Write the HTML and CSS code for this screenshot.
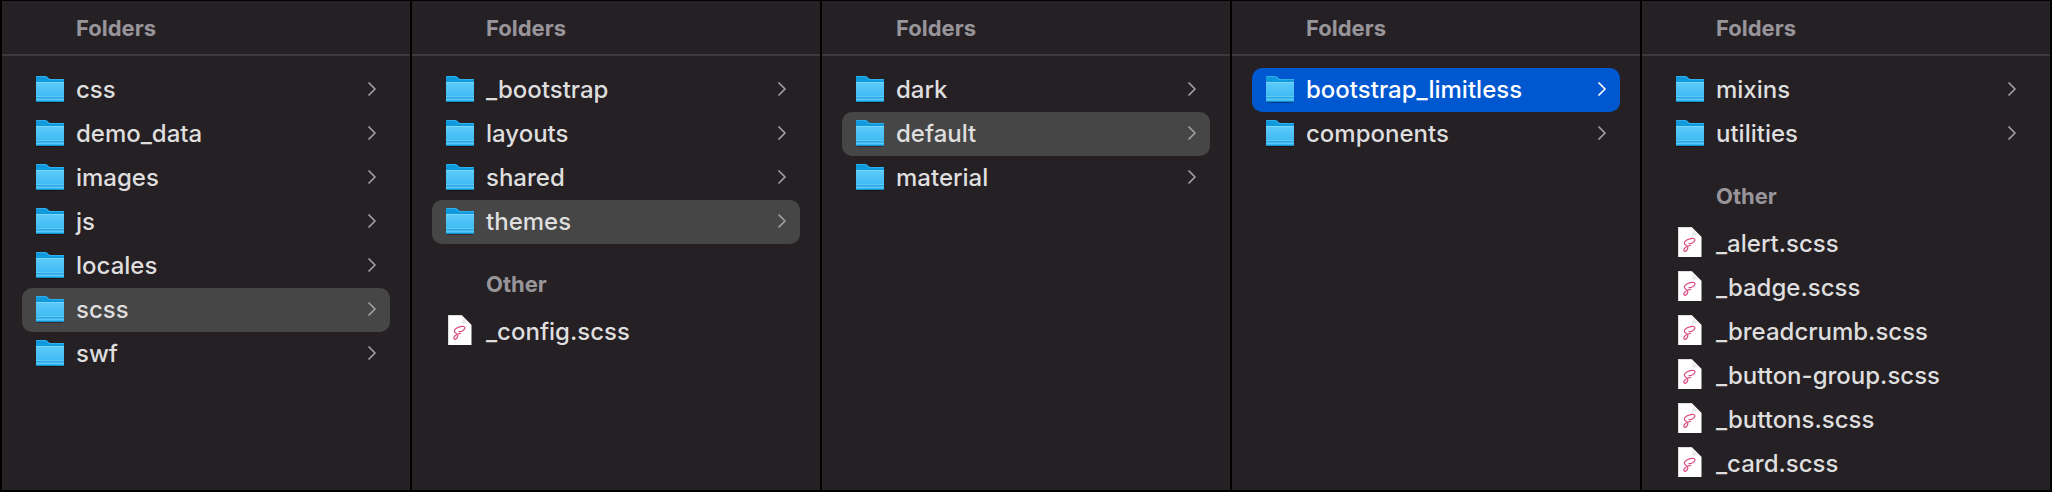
FILE: index.html
```html
<!DOCTYPE html>
<html lang="en">
<head>
<meta charset="utf-8">
<title>Folders</title>
<link rel="stylesheet" href="styles.css">
</head>
<body>
<svg class="sprite" aria-hidden="true">
  <defs>
    <linearGradient id="front" x1="0" y1="0" x2="0" y2="1">
      <stop offset="0" stop-color="#5ccbfb"/>
      <stop offset="1" stop-color="#34b4ee"/>
    </linearGradient>
    <linearGradient id="fold" x1="0" y1="1" x2="1" y2="0">
      <stop offset="0" stop-color="#d2d2d2"/>
      <stop offset="0.6" stop-color="#ffffff"/>
    </linearGradient>
    <symbol id="folder" viewBox="0 0 28 30">
      <rect x="0.5" y="25" width="27" height="3" rx="1.5" fill="#000" opacity=".35"/>
      <path d="M0 3V1.5Q0 1 1 1H9.5Q10.500 1 11.300 1.800L12.500 3Q13.500 4 15 4H27.500Q28 4 28 5V10H0Z" fill="#1099dd"/>
      <path d="M0.500 1.500H9.500L13 4.500H28" fill="none" stroke="#2eb0ea"/>
      <path d="M0 8Q0 7 1 7H27Q28 7 28 8V26Q28 27 27 27H1Q0 27 0 26Z" fill="url(#front)"/>
      <path d="M0 7.500H28" stroke="#7ad6fc"/>
      <path d="M0 21.500H28M0 24.500H28" stroke="#69cdf6" opacity=".75"/>
      <path d="M0 22.500H28" stroke="#219fdc" opacity=".6"/>
      <path d="M0.500 26.500H27.500" stroke="#1590cf"/>
    </symbol>
    <symbol id="sass" viewBox="0 0 28 30">
      <path d="M2 0H15.500L25.500 10V30H2Z" fill="#fff"/>
      <path d="M15.500 0Q17 3 16.500 8.500Q22 7.500 25.500 10Z" fill="url(#fold)"/>
      <path d="M2.500 30V.5H15.500" fill="none" stroke="#cfcfcf" stroke-width=".7"/>
      <path d="M13 16.600C15.500 16.800 18.500 15 18.900 13.200C19.300 11.400 17 10.900 14.500 11.600C11.500 12.400 8.400 14.400 8.300 16.200C8.300 17.900 11.500 18.500 11.800 20.300C12 22 10.500 24 9 24.300C7.600 24.500 7.500 22.800 8.500 21.400C9.700 19.800 12.500 18.600 14.700 18.500" fill="none" stroke="#dd4c83" stroke-width="1.200" stroke-linecap="round"/>
    </symbol>
    <symbol id="chevron" viewBox="0 0 8 14">
      <path d="M1 1L7 7L1 13" fill="none" stroke="currentColor" stroke-width="1.700" stroke-linecap="round" stroke-linejoin="round"/>
    </symbol>
  </defs>
</svg>
<main class="browser">
  <section class="column">
    <h2 class="column-title">Folders</h2>
    <ul class="list">
      <li><a class="row" href="#css"><svg class="icon"><use href="#folder"/></svg><span class="name">css</span><svg class="chevron"><use href="#chevron"/></svg></a></li>
      <li><a class="row" href="#demo_data"><svg class="icon"><use href="#folder"/></svg><span class="name">demo_data</span><svg class="chevron"><use href="#chevron"/></svg></a></li>
      <li><a class="row" href="#images"><svg class="icon"><use href="#folder"/></svg><span class="name">images</span><svg class="chevron"><use href="#chevron"/></svg></a></li>
      <li><a class="row" href="#js"><svg class="icon"><use href="#folder"/></svg><span class="name">js</span><svg class="chevron"><use href="#chevron"/></svg></a></li>
      <li><a class="row" href="#locales"><svg class="icon"><use href="#folder"/></svg><span class="name">locales</span><svg class="chevron"><use href="#chevron"/></svg></a></li>
      <li><a class="row row-open" href="#scss"><svg class="icon"><use href="#folder"/></svg><span class="name">scss</span><svg class="chevron"><use href="#chevron"/></svg></a></li>
      <li><a class="row" href="#swf"><svg class="icon"><use href="#folder"/></svg><span class="name">swf</span><svg class="chevron"><use href="#chevron"/></svg></a></li>
    </ul>
  </section>
  <section class="column">
    <h2 class="column-title">Folders</h2>
    <ul class="list">
      <li><a class="row" href="#_bootstrap"><svg class="icon"><use href="#folder"/></svg><span class="name">_bootstrap</span><svg class="chevron"><use href="#chevron"/></svg></a></li>
      <li><a class="row" href="#layouts"><svg class="icon"><use href="#folder"/></svg><span class="name">layouts</span><svg class="chevron"><use href="#chevron"/></svg></a></li>
      <li><a class="row" href="#shared"><svg class="icon"><use href="#folder"/></svg><span class="name">shared</span><svg class="chevron"><use href="#chevron"/></svg></a></li>
      <li><a class="row row-open" href="#themes"><svg class="icon"><use href="#folder"/></svg><span class="name">themes</span><svg class="chevron"><use href="#chevron"/></svg></a></li>
    </ul>
    <h3 class="group-title">Other</h3>
    <ul class="list">
      <li><a class="row" href="#_config"><svg class="icon icon-file"><use href="#sass"/></svg><span class="name">_config.scss</span></a></li>
    </ul>
  </section>
  <section class="column">
    <h2 class="column-title">Folders</h2>
    <ul class="list">
      <li><a class="row" href="#dark"><svg class="icon"><use href="#folder"/></svg><span class="name">dark</span><svg class="chevron"><use href="#chevron"/></svg></a></li>
      <li><a class="row row-open" href="#default"><svg class="icon"><use href="#folder"/></svg><span class="name">default</span><svg class="chevron"><use href="#chevron"/></svg></a></li>
      <li><a class="row" href="#material"><svg class="icon"><use href="#folder"/></svg><span class="name">material</span><svg class="chevron"><use href="#chevron"/></svg></a></li>
    </ul>
  </section>
  <section class="column">
    <h2 class="column-title">Folders</h2>
    <ul class="list">
      <li><a class="row row-selected" href="#bootstrap_limitless" aria-current="true"><svg class="icon"><use href="#folder"/></svg><span class="name">bootstrap_limitless</span><svg class="chevron"><use href="#chevron"/></svg></a></li>
      <li><a class="row" href="#components"><svg class="icon"><use href="#folder"/></svg><span class="name">components</span><svg class="chevron"><use href="#chevron"/></svg></a></li>
    </ul>
  </section>
  <section class="column">
    <h2 class="column-title">Folders</h2>
    <ul class="list">
      <li><a class="row" href="#mixins"><svg class="icon"><use href="#folder"/></svg><span class="name">mixins</span><svg class="chevron"><use href="#chevron"/></svg></a></li>
      <li><a class="row" href="#utilities"><svg class="icon"><use href="#folder"/></svg><span class="name">utilities</span><svg class="chevron"><use href="#chevron"/></svg></a></li>
    </ul>
    <h3 class="group-title">Other</h3>
    <ul class="list">
      <li><a class="row" href="#_alert"><svg class="icon icon-file"><use href="#sass"/></svg><span class="name">_alert.scss</span></a></li>
      <li><a class="row" href="#_badge"><svg class="icon icon-file"><use href="#sass"/></svg><span class="name">_badge.scss</span></a></li>
      <li><a class="row" href="#_breadcrumb"><svg class="icon icon-file"><use href="#sass"/></svg><span class="name">_breadcrumb.scss</span></a></li>
      <li><a class="row" href="#_button-group"><svg class="icon icon-file"><use href="#sass"/></svg><span class="name">_button-group.scss</span></a></li>
      <li><a class="row" href="#_buttons"><svg class="icon icon-file"><use href="#sass"/></svg><span class="name">_buttons.scss</span></a></li>
      <li><a class="row" href="#_card"><svg class="icon icon-file"><use href="#sass"/></svg><span class="name">_card.scss</span></a></li>
    </ul>
  </section>
</main>
</body>
</html>
```

FILE: styles.css
```css
* {
  box-sizing: border-box;
}

body {
  margin: 0;
  background: #000;
  color: #dfdedf;
  font-family: Inter, "Liberation Sans", sans-serif;
  font-size: 24px;
  font-weight: 500;
}

.sprite {
  position: absolute;
  width: 0;
  height: 0;
}

.browser {
  display: grid;
  grid-template-columns: repeat(5, 1fr);
  gap: 2px;
  min-height: 100vh;
  padding: 1px 2px 2px;
}

.column {
  background: #252024;
}

.column-title,
.group-title {
  margin: 0;
  padding-left: 74px;
  color: #98959a;
  font-size: 22px;
  font-weight: 700;
  line-height: 26px;
}

.column-title {
  margin-bottom: 12px;
  padding-top: 14px;
  padding-bottom: 13px;
  border-bottom: 2px solid #3d393d;
}

.group-title {
  padding-top: 27px;
  padding-bottom: 13px;
}

.list {
  margin: 0;
  padding: 0 20px;
  list-style: none;
}

.row {
  display: flex;
  align-items: center;
  height: 44px;
  padding: 0 14px;
  border-radius: 10px;
  color: inherit;
  text-decoration: none;
}

.row-open {
  background: #464646;
}

.row-selected {
  background: #0058d0;
  color: #fff;
}

.icon {
  flex: none;
  width: 28px;
  height: 30px;
  margin-right: 12px;
}

.icon-file {
  margin-bottom: 4px;
}

.name {
  flex: 1;
  line-height: 30px;
}

.chevron {
  flex: none;
  width: 8px;
  height: 14px;
  margin-bottom: 2px;
  color: #a19fa1;
}

.row-selected .chevron {
  color: #fff;
}
```
